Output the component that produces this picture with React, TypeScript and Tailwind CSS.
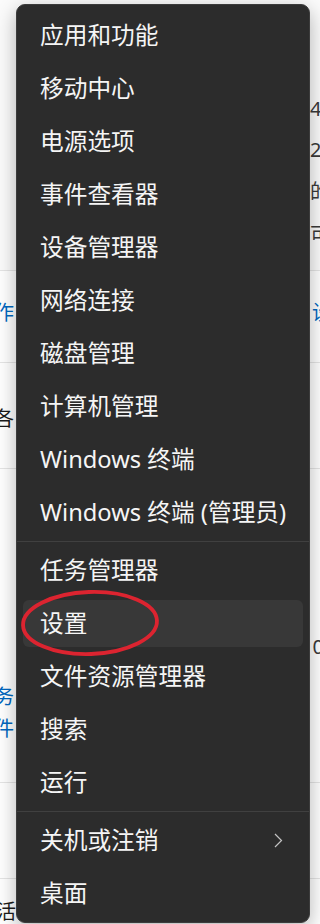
import React from 'react';

type MenuItem = {
  label: string;
  active?: boolean;
  submenu?: boolean;
};

const groups: MenuItem[][] = [
  [
    { label: '应用和功能' },
    { label: '移动中心' },
    { label: '电源选项' },
    { label: '事件查看器' },
    { label: '设备管理器' },
    { label: '网络连接' },
    { label: '磁盘管理' },
    { label: '计算机管理' },
    { label: 'Windows 终端' },
    { label: 'Windows 终端 (管理员)' },
  ],
  [
    { label: '任务管理器' },
    { label: '设置', active: true },
    { label: '文件资源管理器' },
    { label: '搜索' },
    { label: '运行' },
  ],
  [{ label: '关机或注销', submenu: true }, { label: '桌面' }],
];

// the settings page that peeks out from behind the menu
const BackgroundPage = () => (
  <div className="flex h-full flex-col bg-white text-[20px] leading-none text-[#1b1b1b]">
    <div className="flex h-[271px] shrink-0 justify-end border-b border-[#e5e5e5] bg-[#fbfbfb]">
      <div className="mr-[-12px] flex w-[22px] flex-col pt-[88px] text-[#3a3a3a]">
        <span className="flex h-[41px] items-center">4</span>
        <span className="flex h-[41px] items-center">2</span>
        <span className="flex h-[43px] items-center">的</span>
        <span className="flex h-[43px] items-center">可</span>
      </div>
    </div>
    <div className="flex h-[92px] shrink-0 items-center justify-between border-b border-[#e5e5e5] pb-[8px]">
      <span className="ml-[-6px] text-[#0067c0]">作</span>
      <span className="mr-[-12px] text-[#0067c0]">设</span>
    </div>
    <div className="flex h-[106px] shrink-0 items-center border-b border-[#e5e5e5] pt-[6px]">
      <span className="ml-[-6px]">各</span>
    </div>
    <div className="flex h-[314px] shrink-0 flex-col border-b border-[#e5e5e5]">
      <div className="flex h-[190px] items-end justify-end pb-[2px]">
        <span className="mr-[-4px] text-[#3a3a3a]">0</span>
      </div>
      <span className="ml-[-6px] mt-[28px] text-[#0067c0]">务</span>
      <span className="ml-[-6px] mt-[12px] text-[#0067c0]">件</span>
    </div>
    <div className="h-[96px] shrink-0 border-b border-[#e5e5e5]" />
    <div className="flex flex-1 items-end pb-[2px]">
      <span className="ml-[-4px]">活</span>
    </div>
  </div>
);

const Chevron = () => (
  <svg width="9" height="15" viewBox="0 0 9 15" fill="none">
    <polyline points="1,1 7.5,7.5 1,14" stroke="#c4c4c4" strokeWidth="1.2" />
  </svg>
);

const MenuRow = ({ item }: { item: MenuItem }) => (
  <div className="h-[53px] px-[6px] py-[3px]">
    <div
      className={`flex h-full items-center justify-between rounded-[6px] pl-[17px] pr-[20px] ${
        item.active ? 'bg-[#383838]' : ''
      }`}
    >
      <span className="whitespace-nowrap text-[23.7px] leading-none text-[#f5f5f5]">{item.label}</span>
      {item.submenu && <Chevron />}
    </div>
  </div>
);

export default function App() {
  return (
    <div className="relative h-[924px] w-[320px] overflow-hidden font-['Noto_Sans','Noto_Sans_CJK_SC',sans-serif]">
      <BackgroundPage />

      <div className="absolute left-4 top-[4px] w-[294px] rounded-[9px] border border-[#3c3c3c] bg-[#2c2c2c] pb-[2px] pt-[4px] shadow-[0_6px_20px_rgba(0,0,0,0.3)]">
        {groups.map((group, gi) => (
          <div key={gi}>
            {gi > 0 && <div className="my-[2px] h-px bg-[#404040]" />}
            {group.map((item) => (
              <MenuRow key={item.label} item={item} />
            ))}
          </div>
        ))}
      </div>

      {/* red annotation ring round 设置 */}
      <svg
        className="pointer-events-none absolute left-[18px] top-[588px]"
        width="146"
        height="72"
        viewBox="0 0 146 72"
      >
        <ellipse
          cx="72"
          cy="35"
          rx="67"
          ry="31"
          fill="none"
          stroke="#dc2430"
          strokeWidth="3.8"
          transform="rotate(-2 72 35)"
        />
      </svg>
    </div>
  );
}
